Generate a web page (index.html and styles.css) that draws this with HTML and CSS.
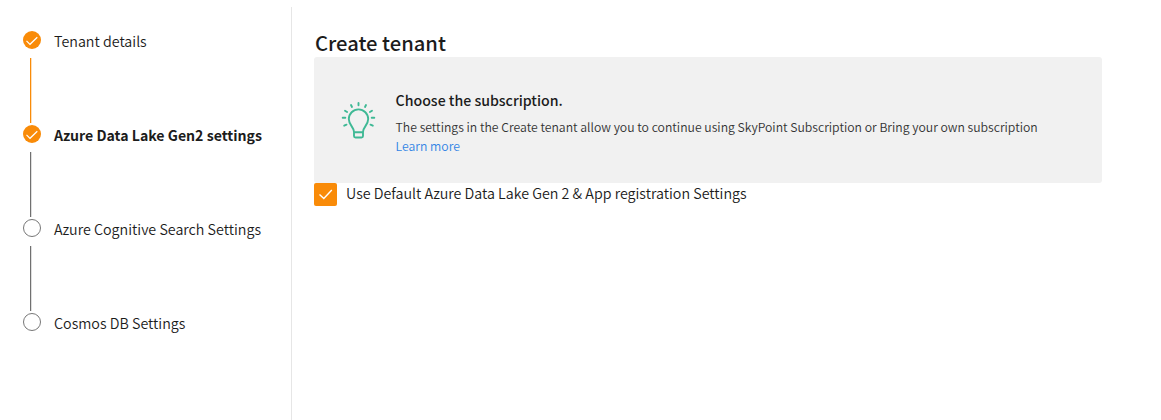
FILE: index.html
```html
<!DOCTYPE html>
<html lang="en">
<head>
<meta charset="utf-8">
<title>Create tenant</title>
<link rel="stylesheet" href="styles.css">
</head>
<body>
<div class="page">
  <nav class="steps">
    <div class="step done">
      <svg class="mark" viewBox="0 0 18 18"><circle cx="9" cy="9" r="9" fill="#f98b08"/><path d="M3.500 9.800 7 13.300l7.300-7.100" fill="none" stroke="#fff" stroke-width="1.2"/></svg>
      <span class="label">Tenant details</span>
    </div>
    <div class="step current">
      <svg class="mark" viewBox="0 0 18 18"><circle cx="9" cy="9" r="9" fill="#f98b08"/><path d="M3.500 9.800 7 13.300l7.300-7.100" fill="none" stroke="#fff" stroke-width="1.2"/></svg>
      <span class="label">Azure Data Lake Gen2 settings</span>
    </div>
    <div class="step">
      <svg class="mark" viewBox="0 0 18 18"><circle cx="9" cy="9" r="8.5" fill="#fff" stroke="#777"/></svg>
      <span class="label">Azure Cognitive Search Settings</span>
    </div>
    <div class="step">
      <svg class="mark" viewBox="0 0 18 18"><circle cx="9" cy="9" r="8.5" fill="#fff" stroke="#777"/></svg>
      <span class="label">Cosmos DB Settings</span>
    </div>
  </nav>
  <main class="content">
    <h1 class="title">Create tenant</h1>
    <section class="notice">
      <svg class="bulb" viewBox="0 0 36 38" fill="none" stroke="#3fb995" stroke-width="1.900" stroke-linecap="round" stroke-linejoin="round">
        <path d="M13 31c0-5-5.200-7-5.200-12.900a9.700 9.700 0 0 1 19.400 0c0 5.900-5.200 7.900-5.200 12.900M13 31.300h9v3.700q0 1.500-1.500 1.500h-6q-1.500 0-1.500-1.500z"/>
        <path d="M17.500 2v2.200M10 4l1 2M25 4l-1 2M4 9.700l2.100 1.300M31 9.700l-2.100 1.300M1.700 16.700h2.600M30.700 16.700h2.600M3.200 24.700l2.300-1M31.800 24.700l-2.300-1"/>
      </svg>
      <div class="notice-text">
        <h2 class="notice-title">Choose the subscription.</h2>
        <p class="notice-body">The settings in the Create tenant allow you to continue using SkyPoint Subscription or Bring your own subscription</p>
        <a class="more">Learn more</a>
      </div>
    </section>
    <label class="option">
      <svg class="box" viewBox="0 0 23 23"><rect width="23" height="23" rx="2" fill="#f98b08"/><path d="M5.500 11.500 9.800 15.500 17.800 7" fill="none" stroke="#fff" stroke-width="1.400"/></svg>
      <span class="option-text">Use Default Azure Data Lake Gen 2 &amp; App registration Settings</span>
    </label>
  </main>
</div>
</body>
</html>
```
FILE: styles.css
```css
* { box-sizing: border-box; }
body {
  margin: 0;
  background: #fff;
  color: #1c1c1c;
  font-family: "Noto Sans CJK SC", "Noto Sans", sans-serif;
  font-weight: 350;
}
.page { display: flex; height: 420px; padding-top: 7px; overflow: hidden; }
.steps { width: 292px; padding: 24px 0 0 23px; border-right: 1px solid #e6e6e6; }
.step { position: relative; display: flex; gap: 13px; height: 94px; }
.step:not(:last-child)::after {
  content: "";
  position: absolute;
  left: 7px;
  top: 27px;
  width: 1px;
  height: 65px;
  background: #707070;
  box-shadow: 1px 0 #dedede;
}
.step.done::after { background: #f98b08; box-shadow: 1px 0 #fddfba; }
.mark { width: 18px; height: 18px; flex: none; }
.label { font-size: 14.28px; line-height: 22px; height: 22px; margin-top: -1px; white-space: nowrap; }
.current .label { font-size: 14.12px; font-weight: 700; }
.content { padding: 23px 0 0 22px; }
.title { margin: 0 0 1px 1px; font-size: 20.2px; line-height: 26px; font-weight: 500; }
.notice { display: flex; width: 788px; height: 126px; padding: 31px 0 0 27px; border-radius: 3px; background: #f1f1f1; }
.bulb { width: 36px; height: 38px; margin: 13px 18.600px 0 0; }
.notice-title { margin: 0; font-size: 14.15px; line-height: 24px; font-weight: 500; }
.notice-body { margin: 6px 0 0; font-size: 12.22px; line-height: 19px; color: #333; }
.more { display: block; font-size: 12.22px; line-height: 19px; color: #3385e5; }
.option { display: flex; gap: 9px; }
.box { width: 23px; height: 23px; }
.option-text { margin-top: -1px; font-size: 14.28px; line-height: 22px; }
```
